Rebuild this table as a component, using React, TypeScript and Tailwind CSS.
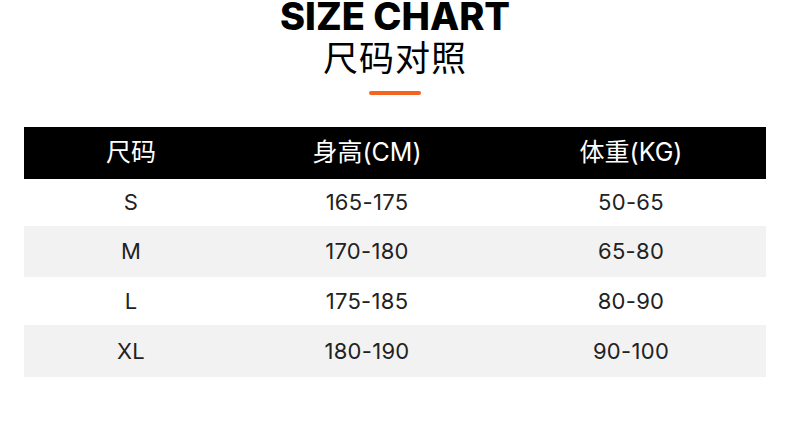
const rows = [
  { size: "S", height: "165-175", weight: "50-65", h: "h-[47px]", bg: "bg-white" },
  { size: "M", height: "170-180", weight: "65-80", h: "h-[51px]", bg: "bg-[#f2f2f2]" },
  { size: "L", height: "175-185", weight: "80-90", h: "h-[48px]", bg: "bg-white" },
  { size: "XL", height: "180-190", weight: "90-100", h: "h-[52px]", bg: "bg-[#f2f2f2]" },
];

const font = "font-['Inter','Noto_Sans_CJK_SC',sans-serif]";

export default function App() {
  return (
    <div className={`w-[790px] h-[429px] bg-white ${font} text-[#1a1a1a]`}>
      <div className="flex flex-col items-center">
        <h1 className="text-[38px] leading-[32px] font-extrabold text-black">
          SIZE CHART
        </h1>
        <p className="mt-[5px] text-[35px] leading-[42px] font-normal tracking-[1px] text-black">
          尺码对照
        </p>
        <div className="mt-[12px] w-[52px] h-[4px] rounded-full bg-[#f5641e]" />
      </div>

      <div className="mx-[24px] mt-[32px]">
        <div className="grid grid-cols-[214px_258px_270px] h-[52px] bg-black text-white text-[25px] items-center text-center">
          <div>尺码</div>
          <div>身高(CM)</div>
          <div>体重(KG)</div>
        </div>
        {rows.map((r) => (
          <div
            key={r.size}
            className={`grid grid-cols-[214px_258px_270px] ${r.h} ${r.bg} text-[22px] tracking-[0.3px] items-center text-center text-[#222]`}
          >
            <div>{r.size}</div>
            <div>{r.height}</div>
            <div>{r.weight}</div>
          </div>
        ))}
      </div>
    </div>
  );
}
